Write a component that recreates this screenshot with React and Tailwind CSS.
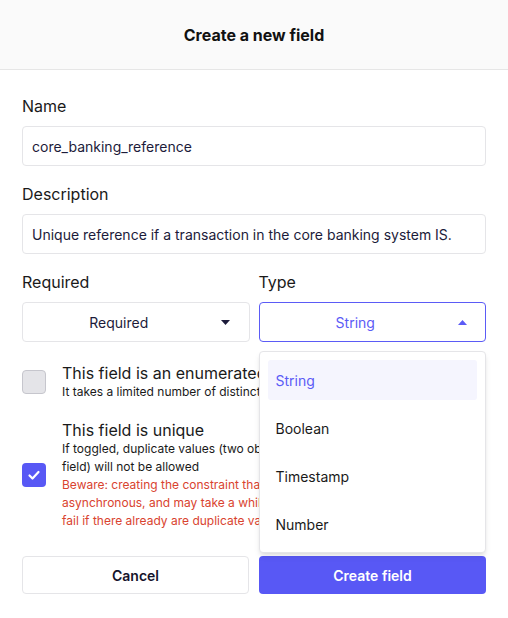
import React from 'react';

const Caret = ({ up, color }) => (
    <svg width="9" height="5" viewBox="0 0 9 5" className={color}>
        {up ? <path d="M0 5 L4.5 0 L9 5 Z" fill="currentColor" /> : <path d="M0 0 L4.5 5 L9 0 Z" fill="currentColor" />}
    </svg>
);

const TYPES = ['String', 'Boolean', 'Timestamp', 'Number'];

const App = () => {
    return (
        <div className="w-[508px] h-[618px] bg-white rounded-b-md overflow-hidden text-[#1a1a1a]" style={{ fontFamily: 'Inter, "Noto Sans", sans-serif' }}>
            {/* Header */}
            <div className="h-[70px] bg-[#fafafa] border-b border-[#e6e6e6] flex items-center justify-center">
                <h1 className="text-[16px] font-bold text-[#111]">Create a new field</h1>
            </div>

            <div className="px-[22px] pt-[24px]">
                <label className="block text-[16px] leading-6">Name</label>
                <div className="mt-2 h-10 border border-[#e5e5e8] rounded-[4px] flex items-center px-[9px] text-[14px] text-[#1c1b3a]">
                    core_banking_reference
                </div>

                <label className="block mt-4 text-[16px] leading-6">Description</label>
                <div className="mt-2 h-10 border border-[#e5e5e8] rounded-[4px] flex items-center px-[9px] text-[14px] text-[#1c1b3a]">
                    Unique reference if a transaction in the core banking system IS.
                </div>

                <div className="mt-4 grid grid-cols-2 gap-[9px]">
                    <div>
                        <label className="block text-[16px] leading-6">Required</label>
                        <div className="mt-2 h-10 border border-[#e5e5e8] rounded-[4px] flex items-center pl-3 text-[14px] text-[#1c1b3a]">
                            <span className="flex-1 text-center">Required</span>
                            <span className="w-[46px] flex justify-center"><Caret color="text-[#1c1b3a]" /></span>
                        </div>
                    </div>
                    <div className="relative">
                        <label className="block text-[16px] leading-6">Type</label>
                        <div className="mt-2 h-10 border border-[#5b5bf6] rounded-[4px] flex items-center pl-3 text-[14px] text-[#5b5bf6]">
                            <span className="flex-1 text-center">String</span>
                            <span className="w-[46px] flex justify-center"><Caret up color="text-[#5b5bf6]" /></span>
                        </div>
                        {/* Open dropdown menu */}
                        <div className="absolute left-0 right-0 top-[81px] z-10 bg-white border border-[#e5e5e8] rounded-[4px] shadow-md p-2 flex flex-col gap-2">
                            {TYPES.map((t, i) => (
                                <div key={t} className={`h-10 rounded-[3px] flex items-center px-2 text-[14px] ${i === 0 ? 'bg-[#f5f5fe] text-[#5b5bf6]' : 'text-[#1a1a1a]'}`}>
                                    {t}
                                </div>
                            ))}
                        </div>
                    </div>
                </div>

                {/* Checkbox rows */}
                <div className="mt-[21px] flex items-center gap-4">
                    <div className="w-6 h-6 shrink-0 rounded-[4px] bg-[#e4e4e8] border border-[#c6c6cd]" />
                    <div className="whitespace-nowrap">
                        <div className="text-[16px] leading-5">This field is an enumerated type</div>
                        <div className="text-[12px] leading-[18px]">It takes a limited number of distinct values</div>
                    </div>
                </div>

                <div className="mt-[19px] flex items-center gap-4">
                    <div className="w-6 h-6 shrink-0 rounded-[4px] bg-[#5858f5] flex items-center justify-center">
                        <svg width="14" height="14" viewBox="0 0 14 14" fill="none">
                            <path d="M2.5 7.5 L5.5 10.5 L11.5 4" stroke="white" strokeWidth="2.2" strokeLinecap="round" strokeLinejoin="round" />
                        </svg>
                    </div>
                    <div className="whitespace-nowrap">
                        <div className="text-[16px] leading-5">This field is unique</div>
                        <div className="text-[12px] leading-[18px]">
                            If toggled, duplicate values (two objects with the same value for this<br />
                            field) will not be allowed
                        </div>
                        <div className="text-[12px] leading-[18px] text-[#d9432f]">
                            Beware: creating the constraint that ensures uniqueness is<br />
                            asynchronous, and may take a while to complete. It may<br />
                            fail if there already are duplicate values.
                        </div>
                    </div>
                </div>

                {/* Footer buttons */}
                <div className="mt-[26px] grid grid-cols-2 gap-[10px]">
                    <button className="h-[38px] border border-[#e5e5e8] rounded-[4px] bg-white text-[14px] font-semibold text-[#14142b]">
                        Cancel
                    </button>
                    <button className="h-[38px] rounded-[4px] bg-[#5858f5] text-[14px] font-semibold text-white">
                        Create field
                    </button>
                </div>
            </div>
        </div>
    );
};

export default App;
